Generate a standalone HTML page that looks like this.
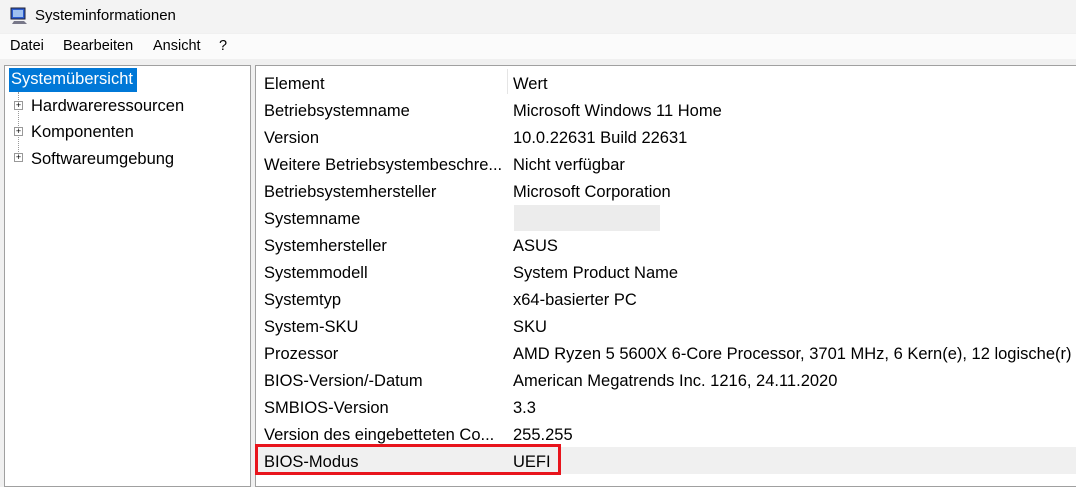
<!DOCTYPE html>
<html><head><style>
body{margin:0;width:1076px;height:474px;overflow:hidden;background:#f0f0f0;font-family:"Liberation Sans",sans-serif;color:#000;position:relative}
.t{position:absolute;white-space:nowrap}
#title{position:absolute;left:0;top:0;width:1076px;height:33px;background:#f3f3f3}
#menu{position:absolute;left:0;top:34px;width:1076px;height:25px;background:#fbfbfb;font-size:14.5px}
#left{position:absolute;left:4px;top:65px;width:245px;height:420px;background:#fff;border:1px solid #a0a0a0}
#right{position:absolute;left:255px;top:65px;width:830px;height:420px;background:#fff;border:1px solid #a0a0a0}
.r{position:absolute;left:0;width:830px;height:27px;font-size:16.5px}
.r span{position:absolute;top:6px}
.a{left:8px}.b{left:257px}
</style></head><body>
<div id="title">
<svg class="t" style="left:9px;top:6px" width="20" height="20" viewBox="0 0 20 20"><rect x="2" y="2" width="14" height="11" fill="#2a5bd0" stroke="#223" stroke-width="1"/><rect x="4" y="4" width="10" height="7" fill="#9ec0f0"/><path d="M5 15h10l3 3H3z" fill="#778"/></svg>
<div class="t" style="left:35px;top:7px;font-size:15px">Systeminformationen</div>
</div>
<div id="menu">
<div class="t" style="left:10px;top:4px">Datei</div>
<div class="t" style="left:63px;top:4px">Bearbeiten</div>
<div class="t" style="left:153px;top:4px">Ansicht</div>
<div class="t" style="left:219px;top:4px">?</div>
</div>
<div id="left">
<div class="t" style="left:4px;top:2px;height:24px;width:128px;background:#0078d7"></div>
<div class="t" style="left:6px;top:4px;font-size:16.5px;color:#fff">Systemübersicht</div>
<div class="t" style="left:13px;top:26px;height:70px;border-left:1px dotted #999"></div>
<div class="t" style="left:9px;top:35px;width:7px;height:7px;border:1px solid #999;background:#fff;font-size:9px;line-height:7px;text-align:center">+</div>
<div class="t" style="left:9px;top:61px;width:7px;height:7px;border:1px solid #999;background:#fff;font-size:9px;line-height:7px;text-align:center">+</div>
<div class="t" style="left:9px;top:87px;width:7px;height:7px;border:1px solid #999;background:#fff;font-size:9px;line-height:7px;text-align:center">+</div>
<div class="t" style="left:26px;top:31px;font-size:16.5px">Hardwareressourcen</div>
<div class="t" style="left:26px;top:57px;font-size:16.5px">Komponenten</div>
<div class="t" style="left:26px;top:84px;font-size:16.5px">Softwareumgebung</div>
</div>
<div id="right">
<div class="t" style="left:251px;top:3px;width:1px;height:25px;background:#e5e5e5"></div>
<div class="r" style="top:3px"><span class="a">Element</span><span class="b">Wert</span></div>
<div class="r" style="top:30px"><span class="a">Betriebsystemname</span><span class="b">Microsoft Windows 11 Home</span></div>
<div class="r" style="top:57px"><span class="a">Version</span><span class="b">10.0.22631 Build 22631</span></div>
<div class="r" style="top:84px"><span class="a">Weitere Betriebsystembeschre...</span><span class="b">Nicht verfügbar</span></div>
<div class="r" style="top:111px"><span class="a">Betriebsystemhersteller</span><span class="b">Microsoft Corporation</span></div>
<div class="r" style="top:138px"><span class="a">Systemname</span><span class="b" style="top:1px;left:258px;width:146px;height:26px;background:#ececec"></span></div>
<div class="r" style="top:165px"><span class="a">Systemhersteller</span><span class="b">ASUS</span></div>
<div class="r" style="top:192px"><span class="a">Systemmodell</span><span class="b">System Product Name</span></div>
<div class="r" style="top:219px"><span class="a">Systemtyp</span><span class="b">x64-basierter PC</span></div>
<div class="r" style="top:246px"><span class="a">System-SKU</span><span class="b">SKU</span></div>
<div class="r" style="top:273px"><span class="a">Prozessor</span><span class="b">AMD Ryzen 5 5600X 6-Core Processor, 3701 MHz, 6 Kern(e), 12 logische(r)</span></div>
<div class="r" style="top:300px"><span class="a">BIOS-Version/-Datum</span><span class="b">American Megatrends Inc. 1216, 24.11.2020</span></div>
<div class="r" style="top:327px"><span class="a">SMBIOS-Version</span><span class="b">3.3</span></div>
<div class="r" style="top:354px"><span class="a">Version des eingebetteten Co...</span><span class="b">255.255</span></div>
<div class="r" style="top:381px;background:#f0f0f0"><span class="a">BIOS-Modus</span><span class="b">UEFI</span></div>
</div>
<div class="t" style="left:255px;top:444px;width:300px;height:25px;border:3px solid #e8141c"></div>
</body></html>
